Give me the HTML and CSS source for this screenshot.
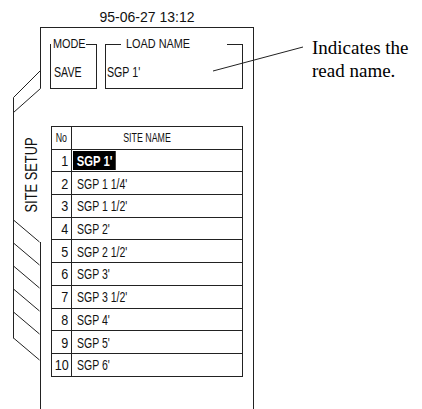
FILE: index.html
```html
<!DOCTYPE html>
<html>
<head>
<link rel="stylesheet" href="styles.css">
</head>
<body>
<div class="page">
    <div class="stamp">95-06-27 13:12</div>
    <div class="sheet">
        <div class="tabs">
            <svg width="41" height="382" viewBox="0 27 41 382">
                <path class="ink" d="M40.5 27V88.5M40.5 70.5L13.5 97.5M40.5 88.5L13.5 112.5M13.5 97.5V338.5M40.5 242V409"/>
                <path class="ink" d="M13.5 220L39.5 242M13.5 243L39.5 265M13.5 266L39.5 288M13.5 289L39.5 311M13.5 312L39.5 334M13.5 338L39.5 360"/>
                <text class="tabname" transform="translate(31 175) rotate(-90) scale(0.78 1)">SITE SETUP</text>
            </svg>
        </div>
        <div class="frame">
            <div class="heads">
                <fieldset class="box mode">
                    <legend><span class="t">MODE</span></legend>
                    <div class="val"><span class="t">SAVE</span></div>
                </fieldset>
                <fieldset class="box load">
                    <legend><span class="t">LOAD NAME</span></legend>
                    <div class="val"><span class="t">SGP 1'</span></div>
                </fieldset>
            </div>
            <table class="sites">
                <tr><th class="no"><span class="t">No</span></th><th class="name"><span class="t">SITE NAME</span></th></tr>
                <tr><td class="no"><span class="t">1</span></td><td class="name"><span class="t sel">SGP 1'</span></td></tr>
                <tr><td class="no"><span class="t">2</span></td><td class="name"><span class="t">SGP 1 1/4'</span></td></tr>
                <tr><td class="no"><span class="t">3</span></td><td class="name"><span class="t">SGP 1 1/2'</span></td></tr>
                <tr><td class="no"><span class="t">4</span></td><td class="name"><span class="t">SGP 2'</span></td></tr>
                <tr><td class="no"><span class="t">5</span></td><td class="name"><span class="t">SGP 2 1/2'</span></td></tr>
                <tr><td class="no"><span class="t">6</span></td><td class="name"><span class="t">SGP 3'</span></td></tr>
                <tr><td class="no"><span class="t">7</span></td><td class="name"><span class="t">SGP 3 1/2'</span></td></tr>
                <tr><td class="no"><span class="t">8</span></td><td class="name"><span class="t">SGP 4'</span></td></tr>
                <tr><td class="no"><span class="t">9</span></td><td class="name"><span class="t">SGP 5'</span></td></tr>
                <tr><td class="no"><span class="t">10</span></td><td class="name"><span class="t">SGP 6'</span></td></tr>
            </table>
        </div>
        <p class="note">Indicates the<br>read name.</p>
    </div>
    <svg class="leader" width="422" height="409">
        <line x1="213" y1="71" x2="303" y2="47"/>
    </svg>
</div>
</body>
</html>
```

FILE: styles.css
```css
body {
    margin: 0;
    background: #fff;
    color: #111;
}

.page {
    position: relative;
    width: 422px;
    height: 409px;
    overflow: hidden;
    font-family: "Liberation Sans", Arial, sans-serif;
}

/* the drawing uses a condensed sans; none is installed, so squeeze Arial widths */
.t {
    display: inline-block;
    transform: scaleX(var(--sx, 0.8));
    transform-origin: left center;
    white-space: pre;
}

.stamp {
    box-sizing: border-box;
    height: 27px;
    width: 214px;
    margin-left: 40px;
    padding-top: 9px;
    text-align: center;
    font-size: 14px;
    line-height: 16px;
}

.sheet {
    display: flex;
    align-items: flex-start;
}

.tabs {
    flex: none;
    width: 40px;
    height: 382px;
}

.tabs svg {
    display: block;
    overflow: visible;
}

.ink {
    fill: none;
    stroke: #222;
    stroke-width: 1;
}

.tabname {
    font-family: "Liberation Sans", Arial, sans-serif;
    font-size: 16.5px;
    fill: #111;
    text-anchor: middle;
    dominant-baseline: central;
}

.frame {
    flex: none;
    box-sizing: border-box;
    width: 214px;
    height: 382px;
    border-top: 1px solid #222;
    border-right: 1px solid #222;
    padding: 9px 10px 0 10px;
}

.heads {
    display: flex;
    gap: 8px;
}

.box {
    box-sizing: border-box;
    height: 52px;
    margin: 0;
    border: 1px solid #222;
    font-size: 14px;
    line-height: 14px;
}

.box legend {
    font-size: 12.5px;
    --sx: 0.87;
}

.box .val {
    padding-top: 14px;
    --sx: 0.76;
}

.mode {
    flex: none;
    width: 47px;
    padding: 0 0 0 3px;
}

.mode legend {
    box-sizing: border-box;
    width: 35px;
    margin-left: -3px;
    padding: 0 0 0 2px;
}

.load {
    flex: 1;
    padding: 0 0 0 1px;
}

.load legend {
    box-sizing: border-box;
    width: 106px;
    margin-left: 14px;
    padding: 0 0 0 5px;
}

.sites {
    width: 192px;
    margin: 37px 0 0 1px;
    border-collapse: separate;
    border-spacing: 0;
    border-top: 1px solid #222;
    border-left: 1px solid #222;
}

.sites th, .sites td {
    height: 21.7px;
    padding: 0;
    border-right: 1px solid #222;
    border-bottom: 1px solid #222;
    vertical-align: middle;
    white-space: pre;
}

.sites th {
    font-weight: normal;
    font-size: 13px;
    --sx: 0.68;
}

.sites th .t {
    transform-origin: center;
}

.sites th.no {
    width: 18px;
    text-align: center;
}

.sites th.name {
    text-align: center;
    padding-right: 20px;
}

.sites td.no {
    font-size: 15px;
    text-align: right;
    padding-right: 2px;
    --sx: 0.84;
}

.sites td.no .t {
    transform-origin: right center;
}

.sites td.name {
    font-size: 15px;
    padding-left: 5px;
    --sx: 0.7;
}

.sites td.name .sel {
    --sx: 0.75;
    margin-left: -4px;
    padding: 0 5px;
    line-height: 19px;
    background: #000;
    color: #fff;
    font-weight: bold;
}

.note {
    flex: none;
    margin: 9px 0 0 58px;
    font-family: "Liberation Serif", "Times New Roman", serif;
    font-size: 19px;
    line-height: 23px;
    color: #000;
    white-space: nowrap;
}

.leader {
    position: absolute;
    left: 0;
    top: 0;
}

.leader line {
    stroke: #222;
    stroke-width: 1;
}
```
